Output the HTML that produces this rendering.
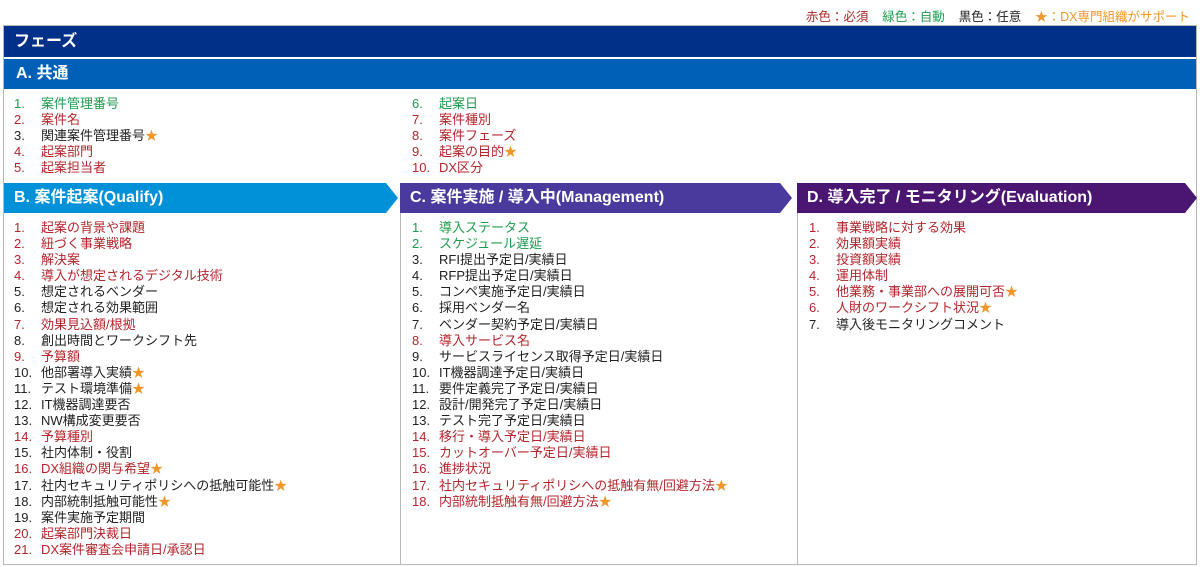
<!DOCTYPE html>
<html><head><meta charset="utf-8"><style>
*{margin:0;padding:0;box-sizing:border-box}
body{width:1200px;height:567px;background:#fff;font-family:"Liberation Sans","Noto Sans CJK JP",sans-serif;position:relative;overflow:hidden}
.abs{position:absolute}
.legend{top:6px;right:10px;font-size:12.5px;white-space:nowrap}
.frame{left:3px;top:25px;width:1194px;height:540px;border:1px solid #b8b8b8}
.h1{left:4px;top:26px;width:1192px;height:31px;background:#003087;color:#fff;font-weight:bold;font-size:16px;line-height:31px;padding-left:10px}
.h2{left:4px;top:59px;width:1192px;height:30px;background:#0060b8;color:#fff;font-weight:bold;font-size:16px;line-height:30px;padding-left:12px}
ul{list-style:none;position:absolute;font-size:13px;line-height:16.1px}
li{white-space:nowrap}
li b{font-weight:normal;display:inline-block;width:27px}
.r{color:#b3262c}.g{color:#1e9b4e}.k{color:#222}
.s{color:#f0962a}
.arrow{top:183px;height:30px;color:#fff;font-weight:bold;font-size:16px;line-height:30px;padding-left:10px}
.vl{top:213px;width:1px;height:352px;background:#b8b8b8}
</style></head><body>
<div class="abs legend"><span style="color:#a82a2a">赤色：必須</span>&nbsp;&nbsp;&nbsp;&nbsp;<span style="color:#1e9b4e">緑色：自動</span>&nbsp;&nbsp;&nbsp;&nbsp;<span style="color:#222">黒色：任意</span>&nbsp;&nbsp;&nbsp;&nbsp;<span style="color:#f0962a">★：DX専門組織がサポート</span></div>
<div class="abs frame"></div>
<div class="abs h1">フェーズ</div>
<div class="abs h2">A. 共通</div>
<ul style="left:14px;top:96px">
<li class="g"><b>1.</b>案件管理番号</li>
<li class="r"><b>2.</b>案件名</li>
<li class="k"><b>3.</b>関連案件管理番号<span class="s">★</span></li>
<li class="r"><b>4.</b>起案部門</li>
<li class="r"><b>5.</b>起案担当者</li>
</ul>
<ul style="left:412px;top:96px">
<li class="g"><b>6.</b>起案日</li>
<li class="r"><b>7.</b>案件種別</li>
<li class="r"><b>8.</b>案件フェーズ</li>
<li class="r"><b>9.</b>起案の目的<span class="s">★</span></li>
<li class="r"><b>10.</b>DX区分</li>
</ul>
<svg class="abs" style="left:0;top:183px" width="1200" height="30">
<polygon points="4,0 386,0 398,15 386,30 4,30" fill="#0091d8"/>
<polygon points="400,0 780,0 792,15 780,30 400,30" fill="#4b3a9e"/>
<polygon points="797,0 1185,0 1197,15 1185,30 797,30" fill="#4a1672"/>
</svg>
<div class="abs arrow" style="left:4px">B. 案件起案(Qualify)</div>
<div class="abs arrow" style="left:400px">C. 案件実施 / 導入中(Management)</div>
<div class="abs arrow" style="left:797px">D. 導入完了 / モニタリング(Evaluation)</div>
<div class="abs vl" style="left:400px"></div>
<div class="abs vl" style="left:797px"></div>
<ul style="left:14px;top:220px">
<li class="r"><b>1.</b>起案の背景や課題</li>
<li class="r"><b>2.</b>紐づく事業戦略</li>
<li class="r"><b>3.</b>解決案</li>
<li class="r"><b>4.</b>導入が想定されるデジタル技術</li>
<li class="k"><b>5.</b>想定されるベンダー</li>
<li class="k"><b>6.</b>想定される効果範囲</li>
<li class="r"><b>7.</b>効果見込額/根拠</li>
<li class="k"><b>8.</b>創出時間とワークシフト先</li>
<li class="r"><b>9.</b>予算額</li>
<li class="k"><b>10.</b>他部署導入実績<span class="s">★</span></li>
<li class="k"><b>11.</b>テスト環境準備<span class="s">★</span></li>
<li class="k"><b>12.</b>IT機器調達要否</li>
<li class="k"><b>13.</b>NW構成変更要否</li>
<li class="r"><b>14.</b>予算種別</li>
<li class="k"><b>15.</b>社内体制・役割</li>
<li class="r"><b>16.</b>DX組織の関与希望<span class="s">★</span></li>
<li class="k"><b>17.</b>社内セキュリティポリシへの抵触可能性<span class="s">★</span></li>
<li class="k"><b>18.</b>内部統制抵触可能性<span class="s">★</span></li>
<li class="k"><b>19.</b>案件実施予定期間</li>
<li class="r"><b>20.</b>起案部門決裁日</li>
<li class="r"><b>21.</b>DX案件審査会申請日/承認日</li>
</ul>
<ul style="left:412px;top:220px">
<li class="g"><b>1.</b>導入ステータス</li>
<li class="g"><b>2.</b>スケジュール遅延</li>
<li class="k"><b>3.</b>RFI提出予定日/実績日</li>
<li class="k"><b>4.</b>RFP提出予定日/実績日</li>
<li class="k"><b>5.</b>コンペ実施予定日/実績日</li>
<li class="k"><b>6.</b>採用ベンダー名</li>
<li class="k"><b>7.</b>ベンダー契約予定日/実績日</li>
<li class="r"><b>8.</b>導入サービス名</li>
<li class="k"><b>9.</b>サービスライセンス取得予定日/実績日</li>
<li class="k"><b>10.</b>IT機器調達予定日/実績日</li>
<li class="k"><b>11.</b>要件定義完了予定日/実績日</li>
<li class="k"><b>12.</b>設計/開発完了予定日/実績日</li>
<li class="k"><b>13.</b>テスト完了予定日/実績日</li>
<li class="r"><b>14.</b>移行・導入予定日/実績日</li>
<li class="r"><b>15.</b>カットオーバー予定日/実績日</li>
<li class="r"><b>16.</b>進捗状況</li>
<li class="r"><b>17.</b>社内セキュリティポリシへの抵触有無/回避方法<span class="s">★</span></li>
<li class="r"><b>18.</b>内部統制抵触有無/回避方法<span class="s">★</span></li>
</ul>
<ul style="left:809px;top:220px">
<li class="r"><b>1.</b>事業戦略に対する効果</li>
<li class="r"><b>2.</b>効果額実績</li>
<li class="r"><b>3.</b>投資額実績</li>
<li class="r"><b>4.</b>運用体制</li>
<li class="r"><b>5.</b>他業務・事業部への展開可否<span class="s">★</span></li>
<li class="r"><b>6.</b>人財のワークシフト状況<span class="s">★</span></li>
<li class="k"><b>7.</b>導入後モニタリングコメント</li>
</ul>
</body></html>
